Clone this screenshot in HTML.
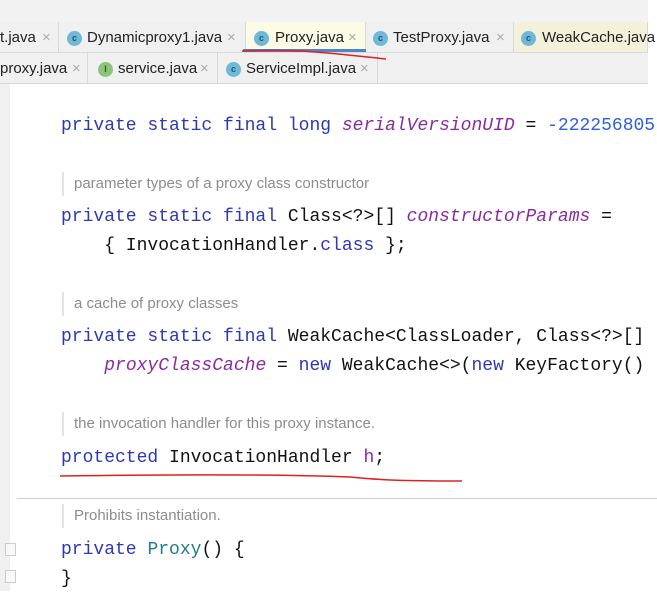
<!DOCTYPE html>
<html><head><style>
body{margin:0;width:657px;height:591px;overflow:hidden;background:#fff;position:relative;font-family:"Liberation Sans",sans-serif}
.a{position:absolute;white-space:pre}
.tab{position:absolute;height:30px;font-size:15px;color:#222;line-height:32px;border-right:1px solid #d8d8d8;box-sizing:border-box}
.ic{position:absolute;width:15px;height:15px;border-radius:50%;background:#6fb8d8;top:9px;font-size:9px;color:#24556b;text-align:center;line-height:15px;font-weight:bold}
.x{position:absolute;color:#aaa;font-size:15px}
.code{position:absolute;left:61px;font-family:"Liberation Mono",monospace;font-size:18px;color:#111;white-space:pre;line-height:29px}
.k{color:#2c38b8}.f{color:#8a2aa0;font-style:italic}.n{color:#2e5fe0}
.cm{position:absolute;left:62px;border-left:2px solid #e4e4e4;padding-left:10px;font-size:15px;color:#8c8c8c;height:24px;line-height:24px}
</style></head><body>
<div class="a" style="left:0;top:0;width:648px;height:22px;background:#f2f2f2"></div>
<div class="a" style="left:0;top:22px;width:648px;height:61px;background:#f0f0f0;border-bottom:1px solid #d6d6d6"></div>
<div class="a" style="left:0;top:52px;width:648px;height:1px;background:#dadada"></div>
<div class="tab" style="left:0;top:22px;width:59px"><span class="a" style="left:0">t.java</span><span class="x" style="left:42px">×</span></div>
<div class="tab" style="left:59px;top:22px;width:187px"><span class="ic" style="left:8px">c</span><span class="a" style="left:28px">Dynamicproxy1.java</span><span class="x" style="left:168px">×</span></div>
<div class="tab" style="left:246px;top:22px;width:120px;background:#fbfbe6"><span class="ic" style="left:8px">c</span><span class="a" style="left:29px">Proxy.java</span><span class="x" style="left:102px">×</span><div class="a" style="left:-3px;top:27px;width:123px;height:3px;background:#4a86c8"></div></div>
<div class="tab" style="left:366px;top:22px;width:148px"><span class="ic" style="left:7px">c</span><span class="a" style="left:27px">TestProxy.java</span><span class="x" style="left:130px">×</span></div>
<div class="tab" style="left:514px;top:22px;width:134px;background:#f3f1da"><span class="ic" style="left:7px">c</span><span class="a" style="left:28px">WeakCache.java</span></div>
<div class="tab" style="left:0;top:53px;width:88px"><span class="a" style="left:0">proxy.java</span><span class="x" style="left:72px">×</span></div>
<div class="tab" style="left:88px;top:53px;width:130px"><span class="ic" style="left:10px;background:#8cc47a;color:#2f5a24">I</span><span class="a" style="left:30px">service.java</span><span class="x" style="left:112px">×</span></div>
<div class="tab" style="left:218px;top:53px;width:160px"><span class="ic" style="left:8px">c</span><span class="a" style="left:28px">ServiceImpl.java</span><span class="x" style="left:142px">×</span></div>
<svg class="a" style="left:0;top:0" width="657" height="591">
<path d="M242 51 C300 49 320 52 386 59" stroke="#e02020" stroke-width="1.5" fill="none"/>
<path d="M60 476 C200 474 300 475 350 477 C380 480 400 481 462 481" stroke="#e02020" stroke-width="1.5" fill="none"/>
</svg>
<div class="a" style="left:0;top:84px;width:10px;height:507px;background:#f0f0f0"></div>
<div class="a" style="left:17px;top:498px;width:640px;height:1px;background:#cfcfcf"></div>
<div class="code" style="top:112px"><span class="k">private static final long</span> <span class="f">serialVersionUID</span> = <span class="n">-222256805</span></div>
<div class="cm" style="top:172px">parameter types of a proxy class constructor</div>
<div class="code" style="top:203px"><span class="k">private static final</span> Class&lt;?&gt;[] <span class="f">constructorParams</span> =</div>
<div class="code" style="top:232px">    { InvocationHandler.<span class="k">class</span> };</div>
<div class="cm" style="top:292px">a cache of proxy classes</div>
<div class="code" style="top:323px"><span class="k">private static final</span> WeakCache&lt;ClassLoader, Class&lt;?&gt;[]</div>
<div class="code" style="top:352px">    <span class="f">proxyClassCache</span> = <span class="k">new</span> WeakCache&lt;&gt;(<span class="k">new</span> KeyFactory()</div>
<div class="cm" style="top:412px">the invocation handler for this proxy instance.</div>
<div class="code" style="top:444px"><span class="k">protected</span> InvocationHandler <span style="color:#8a2aa0">h</span>;</div>
<div class="cm" style="top:504px">Prohibits instantiation.</div>
<div class="code" style="top:536px"><span class="k">private</span> <span style="color:#1f7a8c">Proxy</span>() {</div>
<div class="code" style="top:565px">}</div>
<div class="a" style="left:5px;top:543px;width:9px;height:11px;border:1px solid #ccc;background:#f8f8f8"></div>
<div class="a" style="left:5px;top:570px;width:9px;height:11px;border:1px solid #ccc;background:#f8f8f8"></div>
</body></html>
